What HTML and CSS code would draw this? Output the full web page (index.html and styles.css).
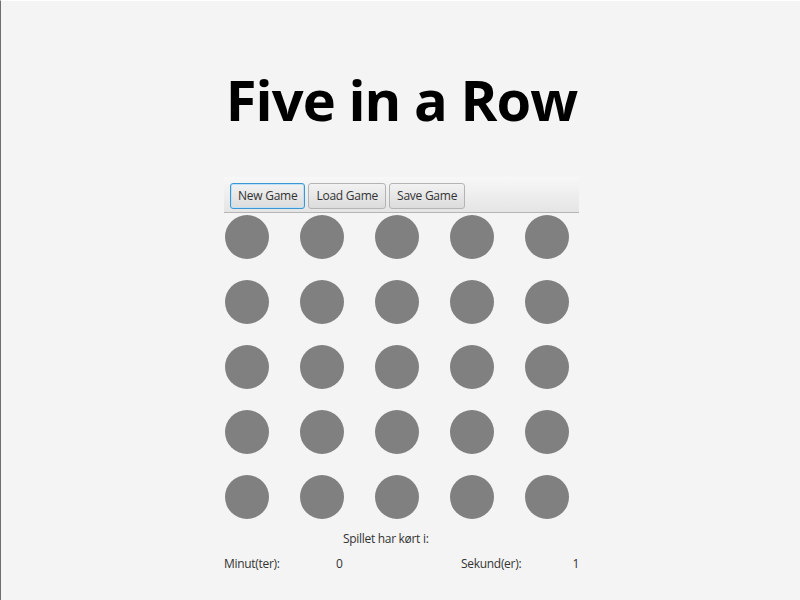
FILE: index.html
```html
<!DOCTYPE html>
<html>
<head>
<meta charset="utf-8">
<link rel="stylesheet" href="styles.css">
</head>
<body>
<div class="frame">
  <main class="column">
    <h1 class="title">Five in a Row</h1>
    <div class="toolbar">
      <button class="btn focused">New Game</button>
      <button class="btn">Load Game</button>
      <button class="btn">Save Game</button>
    </div>
    <div class="board">
      <span class="dot"></span><span class="dot"></span><span class="dot"></span><span class="dot"></span><span class="dot"></span>
      <span class="dot"></span><span class="dot"></span><span class="dot"></span><span class="dot"></span><span class="dot"></span>
      <span class="dot"></span><span class="dot"></span><span class="dot"></span><span class="dot"></span><span class="dot"></span>
      <span class="dot"></span><span class="dot"></span><span class="dot"></span><span class="dot"></span><span class="dot"></span>
      <span class="dot"></span><span class="dot"></span><span class="dot"></span><span class="dot"></span><span class="dot"></span>
    </div>
    <div class="status">
      <div class="status-head">Spillet har kørt i:</div>
      <div class="status-row">
        <span class="lbl">Minut(ter):</span>
        <span class="val">0</span>
        <span class="lbl">Sekund(er):</span>
        <span class="val right">1</span>
      </div>
    </div>
  </main>
</div>
</body>
</html>
```
FILE: styles.css
```css
html, body {
  margin: 0;
  padding: 0;
  background: #f4f4f4;
}
.frame {
  width: 800px;
  height: 600px;
  box-sizing: border-box;
  border-left: 1px solid #6e6e6e;
  border-top: 1px solid #ffffff;
  font-family: "Open Sans", "Noto Sans", sans-serif;
  color: #333;
}
.column {
  width: 355px;
  margin: 0 0 0 223px;
  display: flex;
  flex-direction: column;
}
.title {
  margin: 58px -60px 0 -60px;
  height: 118px;
  white-space: nowrap;
  font-family: "Open Sans", sans-serif;
  font-weight: 700;
  font-size: 56px;
  line-height: 80px;
  letter-spacing: -0.95px;
  text-align: center;
  color: #000;
}
.toolbar {
  box-sizing: content-box;
  height: 29px;
  padding: 6px 0 0 6px;
  border-bottom: 1px solid #b5b5b5;
  background: linear-gradient(#f7f7f7, #e5e5e5);
  display: flex;
  align-items: flex-start;
  gap: 3px;
}
.btn {
  height: 26px;
  box-sizing: border-box;
  padding: 0 7px;
  font-family: "Open Sans", sans-serif;
  font-size: 12px;
  letter-spacing: -0.25px;
  color: #333;
  border: 1px solid #b4b4b4;
  border-radius: 3px;
  background: linear-gradient(#f2f2f2, #dcdcdc);
  line-height: 24px;
}
.btn.focused {
  border-color: #3b97d3;
  box-shadow: inset 0 0 0 1px #bfe0f5;
}
.board {
  display: grid;
  grid-template-columns: repeat(5, 44px);
  column-gap: 31px;
  row-gap: 21px;
  padding: 2px 0 0 1px;
}
.dot {
  width: 44px;
  height: 44px;
  border-radius: 50%;
  background: #808080;
}
.status {
  font-size: 12px;
  letter-spacing: -0.3px;
  color: #333;
}
.status-head {
  margin-top: 10px;
  padding-left: 119px;
  line-height: 20px;
}
.status-row {
  display: grid;
  grid-template-columns: 112px 125px 1fr auto;
  margin-top: 5px;
  line-height: 20px;
}
.right {
  text-align: right;
}
```
